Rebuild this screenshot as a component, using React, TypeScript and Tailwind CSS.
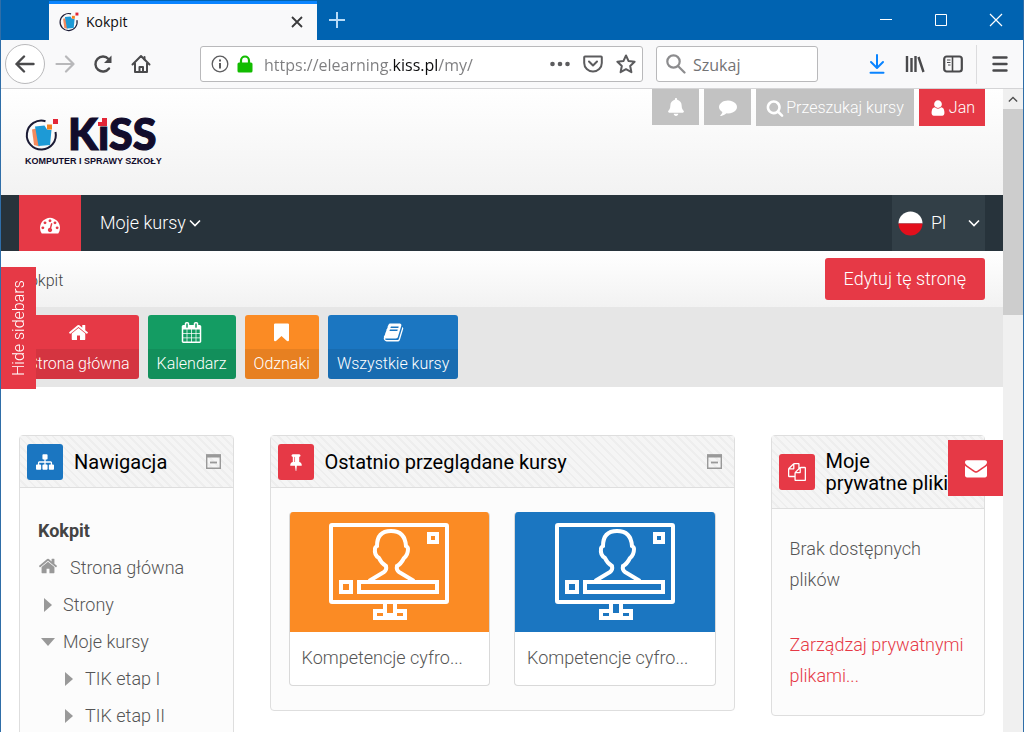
import React, { useState } from "react";
import { FaBell } from "react-icons/fa";

type IconProps = { className?: string };

const paths = {
  home: "M1472 992v480q0 26-19 45t-45 19h-384v-384h-256v384h-384q-26 0-45-19t-19-45v-480q0-1 .5-3t.5-3l575-474 575 474q1 2 1 6zm223-69l-62 74q-8 9-21 11h-3q-13 0-21-7l-692-577-692 577q-12 8-24 7-13-2-21-11l-62-74q-8-10-7-23.5t11-21.5l719-599q32-26 76-26t76 26l244 204v-195q0-14 9-23t23-9h192q14 0 23 9t9 23v408l219 182q10 8 11 21.5t-7 23.5z",
  calendar:
    "M192 1664h288v-288h-288v288zm352 0h320v-288h-320v288zm-352-352h288v-320h-288v320zm352 0h320v-320h-320v320zm-352-384h288v-288h-288v288zm736 736h320v-288h-320v288zm-384-736h320v-288h-320v288zm768 736h288v-288h-288v288zm-384-352h320v-320h-320v320zm-352-864v-288q0-13-9.5-22.5t-22.5-9.5h-64q-13 0-22.5 9.5t-9.5 22.5v288q0 13 9.5 22.5t22.5 9.5h64q13 0 22.5-9.5t9.5-22.5zm736 864h288v-320h-288v320zm-384-384h320v-288h-320v288zm384 0h288v-288h-288v288zm32-480v-288q0-13-9.5-22.5t-22.5-9.5h-64q-13 0-22.5 9.5t-9.5 22.5v288q0 13 9.5 22.5t22.5 9.5h64q13 0 22.5-9.5t9.5-22.5zm384-64v1280q0 52-38 90t-90 38h-1408q-52 0-90-38t-38-90v-1280q0-52 38-90t90-38h128v-96q0-66 47-113t113-47h64q66 0 113 47t47 113v96h384v-96q0-66 47-113t113-47h64q66 0 113 47t47 113v96h128q52 0 90 38t38 90z",
  bookmark:
    "M1420 128q23 0 44 9 33 13 52.5 41t19.5 62v1289q0 34-19.5 62t-52.5 41q-19 8-44 8-48 0-83-32l-441-424-441 424q-36 33-83 33-23 0-44-9-33-13-52.5-41t-19.5-62v-1289q0-34 19.5-62t52.5-41q21-9 44-9h1048z",
  book: "M1703 478q40 57 18 129l-275 906q-19 64-76.5 107.5t-122.5 43.5h-923q-77 0-148.5-53.5t-99.5-131.5q-24-67-2-127 0-4 3-27t4-37q1-8-3-21.5t-3-19.5q2-11 8-21t16.5-23.5 16.5-23.5q23-38 45-91.5t30-91.5q3-10 .5-30t-.5-28q3-11 17-28t17-23q21-36 42-92t25-90q1-9-2.5-32t.5-28q4-13 22-30.5t22-22.5q19-26 42.5-84.5t27.5-96.5q1-8-3-25.5t-2-26.5q2-8 9-18t18-23 17-21q8-12 16.5-30.5t15-35 16-36 19.5-32 26.5-23.5 36-11.5 47.5 5.5l-1 3q38-9 51-9h761q74 0 114 56t18 130l-274 906q-36 119-71.5 153.5t-128.5 34.5h-869q-27 0-38 15-11 16-1 43 24 70 144 70h923q29 0 56-15.5t35-41.5l300-987q7-22 5-57 38 15 59 43zm-1064 2q-4 13 2 22.5t20 9.5h608q13 0 25.5-9.5t16.5-22.5l21-64q4-13-2-22.5t-20-9.5h-608q-13 0-25.5 9.5t-16.5 22.5zm-83 256q-4 13 2 22.5t20 9.5h608q13 0 25.5-9.5t16.5-22.5l21-64q4-13-2-22.5t-20-9.5h-608q-13 0-25.5 9.5t-16.5 22.5z",
  files:
    "M1696 384q40 0 68 28t28 68v1216q0 40-28 68t-68 28h-960q-40 0-68-28t-28-68v-288h-544q-40 0-68-28t-28-68v-672q0-40 20-88t48-76l408-408q28-28 76-48t88-20h416q40 0 68 28t28 68v328q68-40 128-40h416zm-544 213l-299 299h299v-299zm-640-384l-299 299h299v-299zm196 647l316-316v-416h-384v416q0 40-28 68t-68 28h-416v640h512v-256q0-40 20-88t48-76zm956 804v-1152h-384v416q0 40-28 68t-68 28h-416v640h896z",
  pin: "M800 864v-448q0-14-9-23t-23-9-23 9-9 23v448q0 14 9 23t23 9 23-9 9-23zm672 352q0 26-19 45t-45 19h-429l-51 483q-2 12-10.5 20.5t-20.5 8.5h-1q-27 0-32-27l-76-485h-404q-26 0-45-19t-19-45q0-123 78.5-221.5t177.5-98.5v-512q-52 0-90-38t-38-90 38-90 90-38h640q52 0 90 38t38 90-38 90-90 38v512q99 0 177.5 98.5t78.5 221.5z",
  sitemap:
    "M1792 1248v320q0 40-28 68t-68 28h-320q-40 0-68-28t-28-68v-320q0-40 28-68t68-28h96v-192h-512v192h96q40 0 68 28t28 68v320q0 40-28 68t-68 28h-320q-40 0-68-28t-28-68v-320q0-40 28-68t68-28h96v-192h-512v192h96q40 0 68 28t28 68v320q0 40-28 68t-68 28h-320q-40 0-68-28t-28-68v-320q0-40 28-68t68-28h96v-192q0-52 38-90t90-38h512v-192h-96q-40 0-68-28t-28-68v-320q0-40 28-68t68-28h320q40 0 68 28t28 68v320q0 40-28 68t-68 28h-96v192h512q52 0 90 38t38 90v192h96q40 0 68 28t28 68z",
  dashboard:
    "M384 1152q0-53-37.5-90.5t-90.5-37.5-90.5 37.5-37.5 90.5 37.5 90.5 90.5 37.5 90.5-37.5 37.5-90.5zm192-448q0-53-37.5-90.5t-90.5-37.5-90.5 37.5-37.5 90.5 37.5 90.5 90.5 37.5 90.5-37.5 37.5-90.5zm428 481l101-382q6-26-7.5-48.5t-38.5-29.5-48 6.5-30 39.5l-101 382q-60 5-107 43.5t-63 98.5q-20 77 20 146t117 89 146-20 89-117q16-60-6-117t-72-91zm660-33q0-53-37.5-90.5t-90.5-37.5-90.5 37.5-37.5 90.5 37.5 90.5 90.5 37.5 90.5-37.5 37.5-90.5zm-640-640q0-53-37.5-90.5t-90.5-37.5-90.5 37.5-37.5 90.5 37.5 90.5 90.5 37.5 90.5-37.5 37.5-90.5zm448 192q0-53-37.5-90.5t-90.5-37.5-90.5 37.5-37.5 90.5 37.5 90.5 90.5 37.5 90.5-37.5 37.5-90.5zm320 448q0 261-141 483-19 29-54 29h-1402q-35 0-54-29-141-221-141-483 0-182 71-348t191-286 286-191 348-71 348 71 286 191 191 286 71 348z",
  comment:
    "M1792 896q0 174-120 321.5t-326 233-450 85.5q-70 0-145-8-198 175-460 242-49 14-114 22-17 2-30.5-9t-17.5-29v-1q-3-4-.5-12t2-10 4.5-9.5l6-9 7-8.5 8-9q7-8 31-34.5t34.5-38 31-39.5 32.5-51 27-59 26-76q-157-89-247.5-220t-90.5-281q0-130 71-248.5t191-204.5 286-136.5 348-50.5q244 0 450 85.5t326 233 120 321.5z",
  search:
    "M1216 832q0-185-131.5-316.5t-316.5-131.5-316.5 131.5-131.5 316.5 131.5 316.5 316.5 131.5 316.5-131.5 131.5-316.5zm512 832q0 52-38 90t-90 38q-54 0-90-38l-343-342q-179 124-399 124-143 0-273.5-55.5t-225-150-150-225-55.5-273.5 55.5-273.5 150-225 225-150 273.5-55.5 273.5 55.5 225 150 150 225 55.5 273.5q0 220-124 399l343 343q37 37 37 90z",
  user: "M1536 1399q0 109-62.5 187t-150.5 78h-854q-88 0-150.5-78t-62.5-187q0-85 8.5-160.5t31.5-152 58.5-131 94-89 134.5-34.5q131 128 313 128t313-128q76 0 134.5 34.5t94 89 58.5 131 31.5 152 8.5 160.5zm-256-887q0 159-112.5 271.5t-271.5 112.5-271.5-112.5-112.5-271.5 112.5-271.5 271.5-112.5 271.5 112.5 112.5 271.5z",
  envelope:
    "M1792 710v794q0 66-47 113t-113 47h-1472q-66 0-113-47t-47-113v-794q44 49 101 87 362 246 497 345 57 42 92.5 65.5t94.5 48 110 24.5h2q51 0 110-24.5t94.5-48 92.5-65.5q170-123 498-345 57-39 100-87zm0-294q0 79-49 151t-122 123q-376 261-468 325-10 7-42.5 31t-54 38.5-52 32.5-57.5 27-50 9h-2q-23 0-50-9t-57.5-27-52-32.5-54-38.5-42.5-31q-91-64-262-182.5t-205-142.5q-62-42-117-115.5t-55-136.5q0-78 41.5-130t118.5-52h1472q65 0 112.5 47t47.5 113z",
};

function Icon({ name, className }: { name: keyof typeof paths; className?: string }) {
  return (
    <svg viewBox="0 0 1792 1792" fill="currentColor" className={className} aria-hidden="true">
      <path d={paths[name]} />
    </svg>
  );
}

function Chevron({ className }: IconProps) {
  return (
    <svg viewBox="0 0 12 8" fill="none" stroke="currentColor" strokeWidth="1.600" className={className} aria-hidden="true">
      <path d="M1 1.500 6 6.500l5-5" />
    </svg>
  );
}

function LogoMark({ className }: IconProps) {
  return (
    <svg viewBox="0 0 34 34" className={className} aria-hidden="true">
      <path d="M20.500 3.200A14.500 14.500 0 1 0 30.500 14" fill="none" stroke="#1b1b35" strokeWidth="2" />
      <path d="m7 11.500 4-1 3.500 18-5.500-1.500z" fill="#f58a5c" />
      <path d="m10 8.500 9.500-1 2.500 4 4.500.5-1.500 15-11.500 1z" fill="#1d9ad6" />
      <path d="M22 6.500h5v5h-5z" fill="#f58220" />
      <path d="M28 1h5v5h-5z" fill="#e32636" />
    </svg>
  );
}

function ToolButton({ label, className, children }: { label: string; className?: string; children: React.ReactNode }) {
  return (
    <button type="button" aria-label={label} className={`flex h-9 w-[38px] shrink-0 items-center justify-center ${className ?? ""}`}>
      {children}
    </button>
  );
}

function TitleBar() {
  return (
    <div className="flex h-10 shrink-0 items-stretch bg-[#0063b1] pl-12 text-white">
      <div className="mt-px flex w-[268px] items-center border-t-[3px] border-[#0a84ff] bg-[#f9f9fa] px-[10px] font-['Open_Sans',sans-serif] text-sm text-[#0c0c0d]">
        <LogoMark className="mr-[7px] size-5" />
        <span className="flex-1">Kokpit</span>
        <button type="button" aria-label="Zamknij kartę" className="flex size-5 items-center justify-center">
          <svg viewBox="0 0 12 12" className="size-3" stroke="#3a3a3c" strokeWidth="1.800">
            <path d="m1 1 10 10M11 1 1 11" />
          </svg>
        </button>
      </div>
      <button type="button" aria-label="Nowa karta" className="flex w-10 items-center justify-center">
        <svg viewBox="0 0 18 18" className="size-[18px]" stroke="#b8dbf7" strokeWidth="2">
          <path d="M9 1v16M1 9h16" />
        </svg>
      </button>
      <div className="flex-1" />
      <button type="button" aria-label="Minimalizuj" className="flex w-[55px] items-center justify-center">
        <svg viewBox="0 0 12 12" className="size-3" stroke="currentColor">
          <path d="M0 5.500h12" />
        </svg>
      </button>
      <button type="button" aria-label="Maksymalizuj" className="flex w-[55px] items-center justify-center">
        <svg viewBox="0 0 12 12" className="size-3" fill="none" stroke="currentColor">
          <path d="M.5.5h11v11H.5z" />
        </svg>
      </button>
      <button type="button" aria-label="Zamknij" className="flex w-[55px] items-center justify-center">
        <svg viewBox="0 0 14 14" className="size-[14px]" stroke="currentColor" strokeWidth="1.200">
          <path d="m1 1 12 12M13 1 1 13" />
        </svg>
      </button>
    </div>
  );
}

function Toolbar() {
  return (
    <div className="flex h-[49px] shrink-0 items-center border-b border-[#d4d4d6] bg-[#f9f9fa] px-1 font-['Open_Sans',sans-serif] text-[#4a4a4c]">
      <button
        type="button"
        aria-label="Wstecz"
        className="mr-px flex size-10 shrink-0 items-center justify-center rounded-full border border-[#b9b9bb] bg-white"
      >
        <svg viewBox="0 0 20 18" className="h-[18px] w-5" fill="none" stroke="currentColor" strokeWidth="2.400" strokeLinecap="round" strokeLinejoin="round">
          <path d="M18.500 9h-17M9 1.500 1.500 9 9 16.500" />
        </svg>
      </button>
      <ToolButton label="Dalej" className="text-[#b8b8ba]">
        <svg viewBox="0 0 20 18" className="h-[18px] w-5" fill="none" stroke="currentColor" strokeWidth="2.200" strokeLinecap="round" strokeLinejoin="round">
          <path d="M1.500 9h17M11 1.500 18.500 9 11 16.500" />
        </svg>
      </ToolButton>
      <ToolButton label="Odśwież">
        <svg viewBox="0 0 20 20" className="size-5" fill="none" stroke="currentColor" strokeWidth="2.400" strokeLinecap="round">
          <path d="M16 14.500A7.500 7.500 0 1 1 15.500 5" />
          <path d="M18.500 1.500V9H11z" fill="currentColor" stroke="none" />
        </svg>
      </ToolButton>
      <ToolButton label="Strona startowa">
        <svg viewBox="0 0 20 20" className="size-5" fill="none" stroke="currentColor" strokeWidth="2" strokeLinecap="round" strokeLinejoin="round">
          <path d="M1.500 10.500 10 2l8.500 8.500M4 9.500V18h12V9.500" />
          <path d="M8.500 18v-5h3.500v5M13.500 3v2.500" />
        </svg>
      </ToolButton>
      <div className="w-10 shrink-0" />
      <div className="flex h-9 min-w-0 flex-1 items-center rounded-[3px] border border-[#b9b9bb] bg-white pr-[6px] pl-[10px]">
        <svg viewBox="0 0 18 18" className="size-[18px] shrink-0" fill="none" stroke="#5c5c5e">
          <circle cx="9" cy="9" r="7.800" strokeWidth="1.300" />
          <path d="M9 8v5.500M9 4.500v2" strokeWidth="2" />
        </svg>
        <svg viewBox="0 0 16 18" className="ml-2 h-[18px] w-4 shrink-0">
          <path d="M4 8V5.500a4 4 0 0 1 8 0V8" fill="none" stroke="#12bc00" strokeWidth="2.200" />
          <rect x=".5" y="7.500" width="15" height="10" rx="1.500" fill="#12bc00" />
        </svg>
        <input
          type="text"
          aria-label="Adres"
          defaultValue="https://elearning.kiss.pl/my/"
          className="mt-[2px] ml-[11px] min-w-0 flex-1 bg-[linear-gradient(to_right,#7d7d7f_128px,#0c0c0d_128px,#0c0c0d_174px,#7d7d7f_174px)] bg-clip-text text-base text-transparent outline-none"
        />
        <div className="flex items-center gap-[13px]">
          <svg viewBox="0 0 20 6" className="h-[6px] w-5" fill="#5c5c5e">
            <circle cx="2.500" cy="3" r="2.300" />
            <circle cx="10" cy="3" r="2.300" />
            <circle cx="17.500" cy="3" r="2.300" />
          </svg>
          <svg viewBox="0 0 20 18" className="h-[18px] w-5" fill="none" stroke="#5c5c5e" strokeWidth="2" strokeLinecap="round" strokeLinejoin="round">
            <path d="M2 1.500h16q.8 0 .8.800V8A8.800 8.500 0 0 1 1.200 8V2.300q0-.8.8-.8z" />
            <path d="m6 6.500 4 4 4-4" />
          </svg>
          <svg viewBox="0 0 20 20" className="size-5" fill="none" stroke="#5c5c5e" strokeWidth="2" strokeLinejoin="round">
            <path d="m10 1.500 2.600 5.600 6 .7-4.400 4.200 1.200 6.200L10 15.200l-5.400 3 1.200-6.200L1.400 7.800l6-.7z" />
          </svg>
        </div>
      </div>
      <label className="ml-[13px] flex h-9 w-[162px] shrink-0 items-center rounded-[3px] border border-[#b9b9bb] bg-white px-[9px]">
        <svg viewBox="0 0 20 20" className="size-5 shrink-0" fill="none" stroke="#8c8c8e" strokeWidth="2.200" strokeLinecap="round">
          <circle cx="7.500" cy="7.500" r="6.200" />
          <path d="m12.500 12.500 6 6" />
        </svg>
        <input
          type="text"
          aria-label="Szukaj"
          placeholder="Szukaj"
          className="mt-[2px] ml-[7px] w-full min-w-0 text-base outline-none placeholder:text-[#737375]"
        />
      </label>
      <div className="w-10 shrink-0" />
      <ToolButton label="Pobrane pliki" className="text-[#0a84ff]">
        <svg viewBox="0 0 16 20" className="h-5 w-4" fill="none" stroke="currentColor" strokeWidth="2" strokeLinecap="round" strokeLinejoin="round">
          <path d="M8 1v12.500M2 8l6 6 6-6M1.500 18.800h13" />
        </svg>
      </ToolButton>
      <ToolButton label="Biblioteka">
        <svg viewBox="0 0 20 18" className="h-[18px] w-5" fill="none" stroke="currentColor" strokeWidth="2.400">
          <path d="M2 1v16M6.500 3v14M10.500 1v16M13.500 2l5 15" />
        </svg>
      </ToolButton>
      <ToolButton label="Panel boczny">
        <svg viewBox="0 0 20 18" className="h-[18px] w-5" fill="none" stroke="currentColor" strokeWidth="2.200">
          <rect x="1.200" y="1.500" width="17.600" height="15" rx="2.500" />
          <path d="M9.500 1.500v15" strokeWidth="1.600" />
          <path d="M4 5h3.500M4 7.500h3.500M5 10h2.500" strokeWidth="1.200" />
        </svg>
      </ToolButton>
      <div className="mx-1 h-[39px] w-px shrink-0 bg-[#dcdcde]" />
      <ToolButton label="Menu">
        <svg viewBox="0 0 16 16" className="size-4" stroke="currentColor" strokeWidth="2.400" strokeLinecap="round">
          <path d="M1.500 1.500h13M1.500 8h13M1.500 14.500h13" />
        </svg>
      </ToolButton>
    </div>
  );
}

function Header() {
  return (
    <header className="flex h-[106px] items-start justify-between bg-linear-to-b from-white to-[#f2f2f2] px-[18px]">
      <a href="#" aria-label="KiSS" className="mt-[29px] ml-[6px] block text-[#120c2c]">
        <span className="flex items-center gap-[9px]">
          <LogoMark className="size-[34px]" />
          <svg viewBox="0 0 90 34" className="h-[34px] w-[90px] overflow-visible">
            <text x="0" y="32" fill="currentColor" stroke="currentColor" strokeWidth="1.200" className="font-['Lato',sans-serif] text-[43px] font-black">
              KıSS
            </text>
            <path d="M34 0h5v8h-9V4h4z" fill="#e32636" />
          </svg>
        </span>
        <span className="mt-[3px] block font-['Liberation_Sans',sans-serif] text-[9px] leading-3 font-bold whitespace-nowrap">
          KOMPUTER I SPRAWY SZKOŁY
        </span>
      </a>
      <div className="flex items-start gap-[5px] text-base font-light text-white">
        <button type="button" aria-label="Powiadomienia" className="flex h-9 w-[47px] items-center justify-center bg-[#c2c2c2]">
          <FaBell className="size-[18px]" />
        </button>
        <button type="button" aria-label="Wiadomości" className="flex h-9 w-[47px] items-center justify-center bg-[#c2c2c2]">
          <Icon name="comment" className="size-[18px]" />
        </button>
        <button type="button" className="flex h-[37px] items-center gap-[2px] bg-[#c2c2c2] px-[10px]">
          <Icon name="search" className="size-[18px]" />
          Przeszukaj kursy
        </button>
        <button type="button" className="flex h-[37px] items-center gap-[2px] bg-[#e63946] px-[10px]">
          <Icon name="user" className="size-[18px]" />
          Jan
        </button>
      </div>
    </header>
  );
}

function Navbar() {
  return (
    <nav className="flex h-14 items-stretch bg-[#27333b] px-[18px] text-lg font-light text-white">
      <a href="#" aria-label="Kokpit" className="flex w-[62px] items-center justify-center bg-[#e63946] pt-1">
        <Icon name="dashboard" className="size-5" />
      </a>
      <button type="button" className="flex items-center gap-[3px] px-[19px]">
        Moje kursy
        <Chevron className="h-2 w-3" />
      </button>
      <div className="flex-1" />
      <div className="relative flex w-[93px] items-center bg-[#323f47] pl-[6px]">
        <svg viewBox="0 0 25 25" className="size-[25px]" aria-hidden="true">
          <path d="M.5 12.500a12 12 0 0 1 24 0z" fill="#fff" />
          <path d="M.5 12.500a12 12 0 0 0 24 0z" fill="#e30f1c" />
        </svg>
        <select aria-label="Język" className="h-full flex-1 appearance-none bg-transparent pl-2 outline-none">
          <option>Pl</option>
        </select>
        <Chevron className="pointer-events-none absolute right-[5px] h-2 w-3" />
      </div>
    </nav>
  );
}

const shortcuts: { label: string; icon: keyof typeof paths; color: string }[] = [
  { label: "Strona główna", icon: "home", color: "bg-[#e63946]" },
  { label: "Kalendarz", icon: "calendar", color: "bg-[#149c63]" },
  { label: "Odznaki", icon: "bookmark", color: "bg-[#fb8b24]" },
  { label: "Wszystkie kursy", icon: "book", color: "bg-[#1b76c1]" },
];

function Shortcuts() {
  return (
    <div className="flex h-20 items-center gap-[9px] bg-[#e6e6e6] px-[18px] text-base font-light text-white">
      {shortcuts.map((item) => (
        <a key={item.label} href="#" className={`flex h-16 flex-col overflow-hidden rounded-[3px] ${item.color}`}>
          <span className="flex h-[34px] items-center justify-center">
            <Icon name={item.icon} className="size-[21px]" />
          </span>
          <span className="flex flex-1 items-center bg-black/8 px-[9px]">{item.label}</span>
        </a>
      ))}
    </div>
  );
}

function Block({
  title,
  icon,
  color,
  collapsible,
  children,
}: {
  title: string;
  icon: keyof typeof paths;
  color: string;
  collapsible?: boolean;
  children: React.ReactNode;
}) {
  const [open, setOpen] = useState<boolean>(true);

  return (
    <section className="rounded-[4px] border border-[#dedede] bg-[#fcfcfc]">
      <div className="flex min-h-[52px] items-center border-b border-[#dedede] bg-[repeating-linear-gradient(45deg,#f5f5f5_0px,#f5f5f5_4px,#eeeeee_4px,#eeeeee_6px)] px-[7px] py-[7px]">
        <span className={`flex size-9 shrink-0 items-center justify-center rounded-[3px] text-white ${color}`}>
          <Icon name={icon} className="size-[18px]" />
        </span>
        <h2 className="ml-[11px] flex-1 py-[7px] text-xl leading-[22px] font-normal text-black">{title}</h2>
        {collapsible ? (
          <button type="button" aria-label="Zwiń blok" onClick={() => setOpen(!open)} className="mr-[5px]">
            <svg viewBox="0 0 15 15" className="size-[15px]" fill="none" stroke="#999">
              <path d="M.7 1h13.600v13.300H.7z" strokeWidth="1.400" />
              <path d="M0 2h15" strokeWidth="3" />
              <path d="M4 8.500h7" strokeWidth="1.800" />
            </svg>
          </button>
        ) : null}
      </div>
      {open ? <div className="px-[18px] py-6">{children}</div> : null}
    </section>
  );
}

function Triangle({ className }: IconProps) {
  return (
    <svg viewBox="0 0 8 14" fill="#999" className={className} aria-hidden="true">
      <path d="M0 0v14l8-7z" />
    </svg>
  );
}

function Navigation() {
  return (
    <ul className="text-lg leading-[37px]">
      <li className="font-bold text-[#444]">Kokpit</li>
      <li>
        <a href="#" className="flex items-center">
          <Icon name="home" className="mr-3 mb-1 size-5 text-[#999]" />
          Strona główna
        </a>
      </li>
      <li>
        <a href="#" className="flex items-center">
          <Triangle className="mr-[11px] ml-[6px] h-[14px] w-2" />
          Strony
        </a>
      </li>
      <li>
        <a href="#" className="flex items-center">
          <Triangle className="mr-[11px] ml-[6px] h-[14px] w-2 rotate-90" />
          Moje kursy
        </a>
        <ul className="pl-[21px]">
          <li>
            <a href="#" className="flex items-center">
              <Triangle className="mr-3 ml-[6px] h-[14px] w-2" />
              TIK etap I
            </a>
          </li>
          <li>
            <a href="#" className="flex items-center">
              <Triangle className="mr-3 ml-[6px] h-[14px] w-2" />
              TIK etap II
            </a>
          </li>
        </ul>
      </li>
    </ul>
  );
}

function CourseCard({ color }: { color: string }) {
  return (
    <a href="#" className="overflow-hidden rounded-[4px] border border-t-0 border-[#d9d9d9] bg-white">
      <div className={`-mx-px flex h-[120px] items-center justify-center ${color}`}>
        <svg viewBox="0 0 120 98" className="h-[98px] w-[120px]" fill="none" stroke="#fff" strokeWidth="4">
          <rect x="2" y="2" width="116" height="77" rx="1" />
          <rect x="100" y="11" width="8" height="8" />
          <rect x="12" y="59" width="10" height="10" />
          <rect x="30" y="59" width="78" height="10" />
          <path d="M40 58l15-9q3-2 2-6-5-3-7-8-5-3-4-9 0-2 2-3Q48 8 62 8t15 15q2 1 2 3 0 6-4 9-3 6-7 8-1 4 2 6l15 9" />
          <path d="M56 80v8M66 80v8M46 88h10v4h10v-4h10v7H46z" />
        </svg>
      </div>
      <div className="h-[53px] truncate px-3 leading-[52px]">Kompetencje cyfro...</div>
    </a>
  );
}

function App() {
  const [showSidebars, setShowSidebars] = useState<boolean>(true);

  return (
    <div className="flex h-screen flex-col overflow-hidden border-x border-[#2f6ea8] bg-white font-['Roboto',sans-serif]">
      <TitleBar />
      <Toolbar />
      <div className="flex min-h-0 flex-1">
        <div className="relative min-w-0 flex-1 overflow-hidden">
          <Header />
          <Navbar />
          <div className="flex h-14 items-center justify-between bg-linear-to-b from-white to-[#f2f2f2] px-[18px] font-light text-[#444]">
            <a href="#" className="pt-1 text-base">
              Kokpit
            </a>
            <button type="button" className="h-[42px] rounded-[3px] bg-[#e63946] px-[19px] text-lg text-white">
              Edytuj tę stronę
            </button>
          </div>
          <Shortcuts />
          <main className="grid grid-cols-4 items-start pt-12 text-lg font-light text-[#555]">
            {showSidebars ? (
              <div className="px-[18px]">
                <Block title="Nawigacja" icon="sitemap" color="bg-[#1b76c1]" collapsible>
                  <Navigation />
                </Block>
              </div>
            ) : null}
            <div className="col-span-2 px-[18px]">
              <Block title="Ostatnio przeglądane kursy" icon="pin" color="bg-[#e63946]" collapsible>
                <div className="grid grid-cols-2 gap-6">
                  <CourseCard color="bg-[#fb8b24]" />
                  <CourseCard color="bg-[#1b76c1]" />
                </div>
              </Block>
            </div>
            {showSidebars ? (
              <div className="px-[18px]">
                <Block title={"Moje prywatne\u00a0pliki"} icon="files" color="bg-[#e63946]">
                  <div className="leading-[31px]">
                    <p>Brak dostępnych plików</p>
                    <a href="#" className="mt-[34px] block text-[#e63946]">
                      Zarządzaj prywatnymi plikami...
                    </a>
                  </div>
                </Block>
              </div>
            ) : null}
          </main>
          <button
            type="button"
            onClick={() => setShowSidebars(!showSidebars)}
            className="absolute top-[178px] left-0 flex h-[122px] w-[35px] rotate-180 items-center justify-center bg-[#e63946] text-base font-light text-white [writing-mode:vertical-rl]"
          >
            Hide sidebars
          </button>
          <button
            type="button"
            aria-label="Kontakt"
            className="absolute top-[351px] right-0 flex h-14 w-[55px] items-center justify-center bg-[#e63946] text-white"
          >
            <Icon name="envelope" className="size-[22px]" />
          </button>
        </div>
        <div className="flex w-5 shrink-0 flex-col bg-[#f0f0f0]" aria-hidden="true">
          <div className="flex h-5 items-center justify-center text-[#505050]">
            <Chevron className="h-[7px] w-[10px] rotate-180" />
          </div>
          <div className="h-[32%] bg-[#cdcdcd]" />
        </div>
      </div>
    </div>
  );
}

export default App;
